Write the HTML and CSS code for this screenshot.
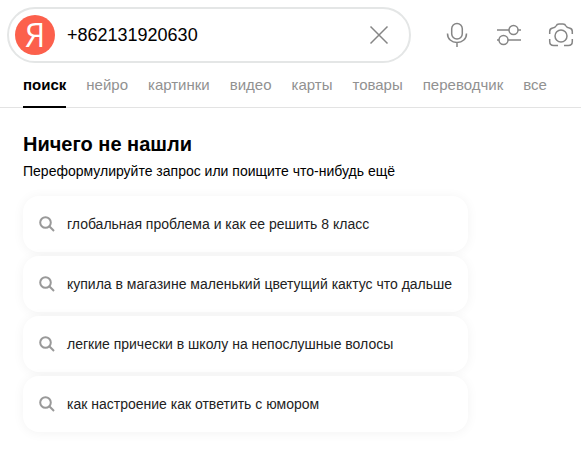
FILE: index.html
```html
<!DOCTYPE html>
<html lang="ru">
<head>
<meta charset="utf-8">
<meta name="viewport" content="width=device-width, initial-scale=1">
<title>+862131920630</title>
<link rel="stylesheet" href="styles.css">
</head>
<body>
<header class="header">
  <form class="search" role="search">
    <div class="search-box">
      <a class="logo" href="#">Я</a>
      <input class="search-input" type="text" value="+862131920630" aria-label="Запрос">
      <button class="icon-button clear" type="button" aria-label="Очистить">
        <svg width="20" height="20" viewBox="0 0 20 20"><path d="M1.5 1.5l17 17M18.5 1.5l-17 17"/></svg>
      </button>
    </div>
    <div class="tools">
      <button class="icon-button" type="button" aria-label="Голосовой поиск">
        <svg width="24" height="26" viewBox="0 0 24 26"><rect x="6.7" y="1.5" width="10.6" height="15.5" rx="5.3"/><path d="M2.5 11.5c0 5.5 4 9 9.500 9s9.500-3.500 9.500-9M12 20.500v4.500"/></svg>
      </button>
      <button class="icon-button" type="button" aria-label="Настройки поиска">
        <svg width="26" height="26" viewBox="0 0 26 26"><path d="M1 8h12M22 8h3M1 18h2M12 18h13"/><circle cx="17.500" cy="8" r="4.500"/><circle cx="7.500" cy="18" r="4.500"/></svg>
      </button>
      <button class="icon-button" type="button" aria-label="Поиск по картинке">
        <svg width="26" height="26" viewBox="0 0 26 26"><path d="M1.700 12V9.500q0-3 3-3.500c2-.2 2.600-.7 3.300-2C8.700 2.500 9.300 2 11 2h4c1.700 0 2.300.5 3 2 .7 1.300 1.300 1.800 3.300 2q3 .5 3 3.500V12M1.700 17v2.500q0 4 4 4H10M24.300 17v2.500q0 4-4 4H16"/><circle cx="13" cy="14" r="6"/></svg>
      </button>
    </div>
  </form>
  <nav class="tabs">
    <a class="tab tab-active" href="#">поиск</a>
    <a class="tab" href="#">нейро</a>
    <a class="tab" href="#">картинки</a>
    <a class="tab" href="#">видео</a>
    <a class="tab" href="#">карты</a>
    <a class="tab" href="#">товары</a>
    <a class="tab" href="#">переводчик</a>
    <a class="tab" href="#">все</a>
  </nav>
</header>
<main class="content">
  <h1 class="title">Ничего не нашли</h1>
  <p class="subtitle">Переформулируйте запрос или поищите что-нибудь ещё</p>
  <ul class="suggestions">
    <li><a class="suggestion" href="#"><svg class="lens" width="16" height="16" viewBox="0 0 16 16"><circle cx="6.500" cy="6.500" r="5.300"/><path d="M10.300 10.300L15 15"/></svg>глобальная проблема и как ее решить 8 класс</a></li>
    <li><a class="suggestion" href="#"><svg class="lens" width="16" height="16" viewBox="0 0 16 16"><circle cx="6.500" cy="6.500" r="5.300"/><path d="M10.300 10.300L15 15"/></svg>купила в магазине маленький цветущий кактус что дальше</a></li>
    <li><a class="suggestion" href="#"><svg class="lens" width="16" height="16" viewBox="0 0 16 16"><circle cx="6.500" cy="6.500" r="5.300"/><path d="M10.300 10.300L15 15"/></svg>легкие прически в школу на непослушные волосы</a></li>
    <li><a class="suggestion" href="#"><svg class="lens" width="16" height="16" viewBox="0 0 16 16"><circle cx="6.500" cy="6.500" r="5.300"/><path d="M10.300 10.300L15 15"/></svg>как настроение как ответить с юмором</a></li>
  </ul>
</main>
</body>
</html>
```
FILE: styles.css
```css
* {
  box-sizing: border-box;
}

body {
  margin: 0;
  background: #fff;
  color: #000;
  font-family: "Liberation Sans", Arial, sans-serif;
  font-size: 14px;
}

a {
  color: inherit;
  text-decoration: none;
}

svg {
  display: block;
  fill: none;
  stroke: currentColor;
}

.header {
  padding-top: 7px;
  border-bottom: 1px solid #e3e3e3;
}

.search {
  display: flex;
  align-items: center;
  gap: 20px;
  padding: 0 7px;
}

.search-box {
  display: flex;
  flex: 1;
  align-items: center;
  min-width: 0;
  height: 56px;
  padding: 0 12px 0 6px;
  border: 2px solid #e4e6e6;
  border-radius: 28px;
}

.logo {
  flex: none;
  width: 40px;
  height: 40px;
  border-radius: 50%;
  background: #fc604c;
  color: #fff;
  font-family: "Open Sans", sans-serif;
  font-size: 32px;
  font-weight: 500;
  line-height: 40px;
  text-align: center;
}

.search-input {
  flex: 1;
  min-width: 0;
  padding: 0 12px;
  border: 0;
  outline: 0;
  background: none;
  color: #000;
  font: 18px "Liberation Sans", Arial, sans-serif;
}

.icon-button {
  display: flex;
  align-items: center;
  justify-content: center;
  width: 52px;
  height: 40px;
  padding: 0;
  border: 0;
  background: none;
  color: #858585;
  stroke-width: 1.5px;
}

.clear {
  width: 36px;
}

.tools {
  display: flex;
  margin-right: -13px;
}

.tabs {
  display: flex;
  gap: 20px;
  padding: 0 23px;
  margin-top: 8px;
}

.tab {
  height: 37px;
  margin-bottom: -1px;
  color: #919191;
  font-size: 15px;
  line-height: 28px;
}

.tab-active {
  border-bottom: 2px solid #000;
  color: #000;
  font-weight: bold;
}

.content {
  padding: 24px 23px;
}

.title {
  margin: 0;
  font-size: 20px;
  line-height: 24px;
}

.subtitle {
  margin: 6px 0 16px;
  line-height: 18px;
}

.suggestions {
  display: flex;
  flex-direction: column;
  gap: 4px;
  width: fit-content;
  margin: 0;
  padding: 0;
  list-style: none;
}

.suggestion {
  display: flex;
  align-items: center;
  gap: 12px;
  height: 56px;
  padding: 0 16px;
  border-radius: 16px;
  background: #fff;
  box-shadow: 0 1px 12px rgba(0, 0, 0, 0.05);
  color: #222;
}

.lens {
  flex: none;
  color: #999;
  stroke-width: 2px;
}
```
